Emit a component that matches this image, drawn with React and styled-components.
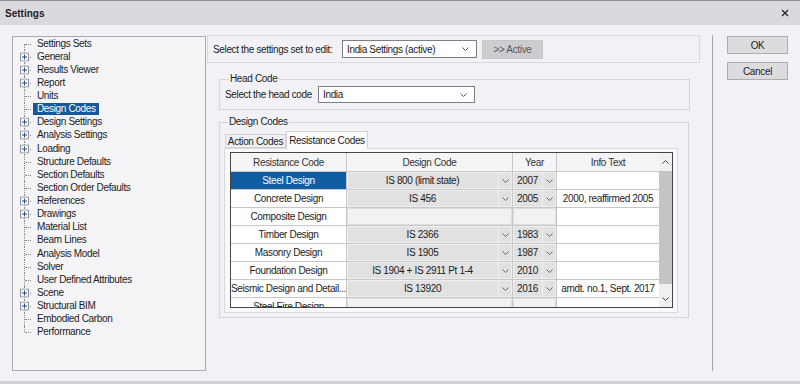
import React from "react";
import styled, { createGlobalStyle } from "styled-components";

const GlobalStyle = createGlobalStyle`
  html, body {
    margin: 0;
    padding: 0;
    background: #f2f2f6;
  }
  body {
    font-family: "Liberation Sans", Arial, sans-serif;
    font-size: 10px;
    letter-spacing: -0.35px;
    color: #1c1c1c;
  }
`;

const Dialog = styled.div`
  width: 800px;
  height: 384px;
  box-sizing: border-box;
  display: flex;
  flex-direction: column;
  background: #f2f2f6;
  border-top: 1px solid #8f8f96;
  border-bottom: 3px solid #d2d2d7;
`;

const TitleBar = styled.div`
  flex: none;
  height: 24px;
  display: flex;
  align-items: center;
  justify-content: space-between;
  padding: 0 11px 0 5px;
  background: #d9d9de;
  font-weight: bold;
  letter-spacing: 0;
  color: #222;
`;

const Body = styled.div`
  flex: 1;
  min-height: 0;
  display: flex;
  padding: 11px 12px 10px 12px;
`;

/* ---------- tree ---------- */

const TreePanel = styled.div`
  flex: none;
  width: 194px;
  box-sizing: border-box;
  border: 1px solid #a9a9ae;
  background: #f4f4f7;
  overflow: hidden;
`;

const TreeRow = styled.div`
  height: 13.14px;
  display: flex;
  align-items: center;
`;

const Branch = styled.span`
  flex: none;
  width: 20px;
  align-self: stretch;
  position: relative;

  &::before {
    content: "";
    position: absolute;
    left: 11px;
    top: ${(p) => (p.$first ? "50%" : "0")};
    bottom: ${(p) => (p.$last ? "50%" : "0")};
    border-left: 1px dotted #8a8a8a;
  }
  &::after {
    content: "";
    position: absolute;
    left: 12px;
    width: 6px;
    top: 50%;
    border-top: 1px dotted #8a8a8a;
  }

  svg {
    position: absolute;
    left: 7px;
    top: 50%;
    transform: translateY(-50%);
    z-index: 1;
  }
`;

const TreeLabel = styled.span`
  padding: 0 3px 0 4px;
  line-height: 12px;
  white-space: nowrap;
  background: ${(p) => (p.$selected ? "#15599b" : "transparent")};
  color: ${(p) => (p.$selected ? "#fff" : "#1c1c1c")};
`;

const PlusBox = () => (
  <svg width="9" height="9" viewBox="0 0 9 9">
    <rect x="0.5" y="0.5" width="8" height="8" fill="#f7f7f9" stroke="#8e8e94" />
    <path d="M2 4.5h5M4.5 2v5" stroke="#2f4f80" strokeWidth="1" />
  </svg>
);

const treeItems = [
  ["Settings Sets", false],
  ["General", true],
  ["Results Viewer", true],
  ["Report", true],
  ["Units", false],
  ["Design Codes", false],
  ["Design Settings", true],
  ["Analysis Settings", true],
  ["Loading", true],
  ["Structure Defaults", false],
  ["Section Defaults", false],
  ["Section Order Defaults", false],
  ["References", true],
  ["Drawings", true],
  ["Material List", false],
  ["Beam Lines", false],
  ["Analysis Model", false],
  ["Solver", false],
  ["User Defined Attributes", false],
  ["Scene", true],
  ["Structural BIM", true],
  ["Embodied Carbon", false],
  ["Performance", false],
];

/* ---------- form parts ---------- */

const Middle = styled.div`
  flex: none;
  width: 493px;
  margin-left: 1px;
  margin-top: -1px;
  display: flex;
  flex-direction: column;
`;

const SetBox = styled.div`
  height: 28px;
  box-sizing: border-box;
  border: 1px solid #d7d7dc;
  display: flex;
  align-items: center;
  padding-left: 5px;
`;

const FieldLabel = styled.span`
  flex: none;
  width: ${(p) => p.$width}px;
  white-space: nowrap;
`;

const Combo = styled.div`
  flex: none;
  width: ${(p) => p.$width}px;
  height: ${(p) => p.$height || 18}px;
  box-sizing: border-box;
  border: 1px solid #7d7d82;
  background: #fff;
  display: flex;
  align-items: center;
  justify-content: space-between;
  padding: 0 7px 0 4px;
`;

const GhostButton = styled.div`
  flex: none;
  width: 61px;
  height: 19px;
  margin-left: 5px;
  box-sizing: border-box;
  border: 1px solid #c6c6c9;
  background: #cdcdcf;
  color: #58585c;
  display: flex;
  align-items: center;
  justify-content: center;
`;

const Group = styled.fieldset`
  margin: ${(p) => p.$top}px ${(p) => p.$right}px 0 12px;
  border: 1px solid #d5d5da;
  padding: ${(p) => p.$pad};
  min-width: 0;

  legend {
    padding: 0 1px;
    margin-left: 4px;
    line-height: 12px;
    color: #1c1c1c;
  }
`;

const Row = styled.div`
  display: flex;
  align-items: center;
`;

/* ---------- tabs ---------- */

const TabStrip = styled.div`
  display: flex;
  align-items: flex-end;
  height: 17px;
  padding-left: 1px;
`;

const Tab = styled.div`
  box-sizing: border-box;
  width: ${(p) => p.$width}px;
  height: ${(p) => (p.$active ? 18 : 14)}px;
  margin-bottom: ${(p) => (p.$active ? -1 : 0)}px;
  border: 1px solid #d2d2d6;
  border-bottom: ${(p) => (p.$active ? "none" : "1px solid #d2d2d6")};
  border-left: ${(p) => (p.$active ? "1px solid #d2d2d6" : "1px solid #d2d2d6")};
  background: ${(p) => (p.$active ? "#fbfbfc" : "#f0f0f4")};
  position: relative;
  z-index: ${(p) => (p.$active ? 1 : 0)};
  display: flex;
  align-items: center;
  justify-content: center;
  padding-bottom: ${(p) => (p.$active ? 1 : 0)}px;
`;

const TabPanel = styled.div`
  height: 165px;
  box-sizing: border-box;
  border: 1px solid #d8d8dc;
  background: #f9f9fb;
  padding: 3px 4px 4px 5px;
`;

/* ---------- grid ---------- */

const Table = styled.div`
  height: 156px;
  box-sizing: border-box;
  border: 1px solid #454545;
  display: flex;
  background: #fff;
`;

const Grid = styled.div`
  flex: 1;
  display: grid;
  grid-template-columns: 115px 165px 43px 102px;
  grid-template-rows: 18px;
  grid-auto-rows: 17px;
  gap: 1px;
  align-content: start;
  background: #c8c8ca;
  overflow: hidden;
`;

const HeadCell = styled.div`
  background: #f5f5f6;
  color: #333;
  display: flex;
  align-items: center;
  justify-content: center;
`;

const NameCell = styled.div`
  background: ${(p) => (p.$selected ? "#0f5ea3" : "#fff")};
  color: ${(p) => (p.$selected ? "#fff" : "#1c1c1c")};
  display: flex;
  align-items: center;
  justify-content: center;
  white-space: nowrap;
  overflow: hidden;
`;

const ComboCell = styled.div`
  display: flex;
  background: ${(p) => (p.$empty ? "#f2f2f3" : "#e1e1e2")};
  box-shadow: inset 0 0 0 1px ${(p) => (p.$empty ? "#dedee0" : "#eeeeef")};
`;

const ComboText = styled.span`
  flex: 1;
  display: flex;
  align-items: center;
  justify-content: center;
  white-space: nowrap;
`;

const DropPart = styled.span`
  flex: none;
  width: 13px;
  border-left: 1px solid #f1f1f2;
  display: flex;
  align-items: center;
  justify-content: center;
`;

const InfoCell = styled.div`
  background: #fff;
  display: flex;
  align-items: center;
  justify-content: center;
  white-space: nowrap;
  overflow: hidden;
`;

const Scrollbar = styled.div`
  flex: none;
  width: 13px;
  background: #f0f0f1;
  display: flex;
  flex-direction: column;
`;

const ScrollArrow = styled.div`
  height: ${(p) => p.$h}px;
  display: flex;
  align-items: center;
  justify-content: center;
  margin-top: ${(p) => (p.$bottom ? "auto" : "0")};
`;

const Thumb = styled.div`
  height: 113px;
  background: #c4c4c6;
`;

/* ---------- right side ---------- */

const Separator = styled.div`
  flex: none;
  width: 1px;
  margin: -1px 0 0 12px;
  background: #a7a7ac;
`;

const ButtonColumn = styled.div`
  flex: none;
  width: 61px;
  margin-left: 14px;
  display: flex;
  flex-direction: column;
  gap: 8px;
`;

const DialogButton = styled.div`
  height: 18px;
  box-sizing: border-box;
  border: 1px solid #adadb0;
  background: #dcdcdf;
  display: flex;
  align-items: center;
  justify-content: center;
`;

const Chevron = ({ up, color = "#555" }) => (
  <svg width="7" height="4" viewBox="0 0 7 4">
    <polyline
      points={up ? "0.5,3.5 3.5,0.5 6.5,3.5" : "0.5,0.5 3.5,3.5 6.5,0.5"}
      fill="none"
      stroke={color}
      strokeWidth="1"
    />
  </svg>
);

const rows = [
  { name: "Steel Design", code: "IS 800 (limit state)", year: "2007", info: "", selected: true },
  { name: "Concrete Design", code: "IS 456", year: "2005", info: "2000, reaffirmed 2005" },
  { name: "Composite Design", empty: true, info: "" },
  { name: "Timber Design", code: "IS 2366", year: "1983", info: "" },
  { name: "Masonry Design", code: "IS 1905", year: "1987", info: "" },
  { name: "Foundation Design", code: "IS 1904 + IS 2911 Pt 1-4", year: "2010", info: "" },
  { name: "Seismic Design and Detail...", code: "IS 13920", year: "2016", info: "amdt. no.1, Sept. 2017" },
  { name: "Steel Fire Design", empty: true, info: "" },
];

const App = () => {
  return (
    <>
      <GlobalStyle />
      <Dialog>
        <TitleBar>
          <span>Settings</span>
          <svg width="8" height="8" viewBox="0 0 8 8">
            <path d="M1 1L7 7M7 1L1 7" stroke="#2a2a2a" strokeWidth="1.4" />
          </svg>
        </TitleBar>
        <Body>
          <TreePanel>
            {treeItems.map(([label, expandable], i) => (
              <TreeRow key={label}>
                <Branch $first={i === 0} $last={i === treeItems.length - 1}>
                  {expandable && <PlusBox />}
                </Branch>
                <TreeLabel $selected={label === "Design Codes"}>{label}</TreeLabel>
              </TreeRow>
            ))}
          </TreePanel>

          <Middle>
            <SetBox>
              <FieldLabel $width={129}>Select the settings set to edit:</FieldLabel>
              <Combo $width={135}>
                <span>India Settings (active)</span>
                <Chevron />
              </Combo>
              <GhostButton>&gt;&gt; Active</GhostButton>
            </SetBox>

            <Group $top={10} $right={10} $pad="1px 10px 6px 5px">
              <legend>Head Code</legend>
              <Row>
                <FieldLabel $width={93}>Select the head code</FieldLabel>
                <Combo $width={157} $height={17}>
                  <span>India</span>
                  <Chevron />
                </Combo>
              </Row>
            </Group>

            <Group $top={6} $right={11} $pad="3px 10px 4px 4px">
              <legend>Design Codes</legend>
              <TabStrip>
                <Tab $width={61}>Action Codes</Tab>
                <Tab $width={82} $active>
                  Resistance Codes
                </Tab>
              </TabStrip>
              <TabPanel>
                <Table>
                  <Grid>
                    <HeadCell>Resistance Code</HeadCell>
                    <HeadCell>Design Code</HeadCell>
                    <HeadCell>Year</HeadCell>
                    <HeadCell>Info Text</HeadCell>
                    {rows.map((r) => (
                      <React.Fragment key={r.name}>
                        <NameCell $selected={r.selected}>{r.name}</NameCell>
                        {r.empty ? (
                          <ComboCell $empty />
                        ) : (
                          <ComboCell>
                            <ComboText>{r.code}</ComboText>
                            <DropPart>
                              <Chevron color="#666" />
                            </DropPart>
                          </ComboCell>
                        )}
                        {r.empty ? (
                          <ComboCell $empty />
                        ) : (
                          <ComboCell>
                            <ComboText>{r.year}</ComboText>
                            <DropPart>
                              <Chevron color="#666" />
                            </DropPart>
                          </ComboCell>
                        )}
                        <InfoCell>{r.info}</InfoCell>
                      </React.Fragment>
                    ))}
                  </Grid>
                  <Scrollbar>
                    <ScrollArrow $h={18}>
                      <Chevron up color="#444" />
                    </ScrollArrow>
                    <Thumb />
                    <ScrollArrow $h={17} $bottom>
                      <Chevron color="#444" />
                    </ScrollArrow>
                  </Scrollbar>
                </Table>
              </TabPanel>
            </Group>
          </Middle>

          <Separator />

          <ButtonColumn>
            <DialogButton>OK</DialogButton>
            <DialogButton>Cancel</DialogButton>
          </ButtonColumn>
        </Body>
      </Dialog>
    </>
  );
};

export default App;
